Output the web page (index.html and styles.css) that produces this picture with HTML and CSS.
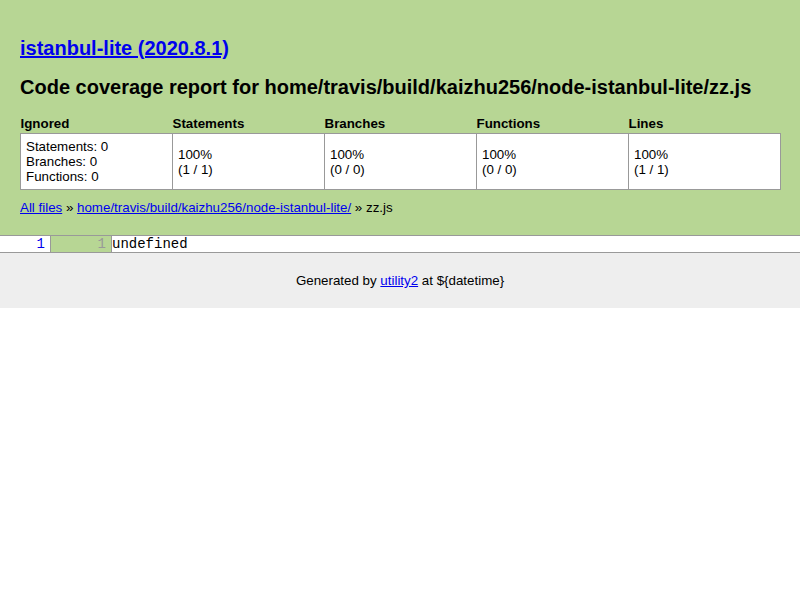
FILE: index.html
```html
<!DOCTYPE html>
<html>
<head>
<meta charset="utf-8">
<title>istanbul-lite</title>
<link rel="stylesheet" href="styles.css">
</head>
<body>
<div class="header">
  <h1><a href="#">istanbul-lite (2020.8.1)</a></h1>
  <h2>Code coverage report for home/travis/build/kaizhu256/node-istanbul-lite/zz.js</h2>
  <table class="summary">
    <thead>
      <tr><th>Ignored</th><th>Statements</th><th>Branches</th><th>Functions</th><th>Lines</th></tr>
    </thead>
    <tbody>
      <tr>
        <td>Statements: 0<br>Branches: 0<br>Functions: 0</td>
        <td>100%<br>(1 / 1)</td>
        <td>100%<br>(0 / 0)</td>
        <td>100%<br>(0 / 0)</td>
        <td>100%<br>(1 / 1)</td>
      </tr>
    </tbody>
  </table>
  <div class="path"><a href="#">All files</a> » <a href="#">home/travis/build/kaizhu256/node-istanbul-lite/</a> » zz.js</div>
</div>
<table class="code">
  <tr>
    <td class="line-count"><a href="#">1</a></td>
    <td class="line-coverage">1</td>
    <td class="text">undefined</td>
  </tr>
</table>
<div class="footer">Generated by <a href="#">utility2</a> at ${datetime}</div>
</body>
</html>
```

FILE: styles.css
```css
body {
  margin: 0;
  font-family: "Liberation Sans", Arial, sans-serif;
  font-size: 13.333px;
  line-height: 15px;
  color: #000;
  background: #fff;
}
a { color: #00e; }
.header {
  background: #b7d694;
  padding: 20px 20px 20px;
}
.header h1 {
  margin: 16px 0 0;
  font-size: 20px;
  line-height: 24px;
}
.header h2 {
  margin: 15px 0 0;
  font-size: 20px;
  line-height: 24px;
}
.summary {
  margin-top: 16px;
  width: 761px;
  border-collapse: collapse;
  table-layout: fixed;
}
.summary th {
  text-align: left;
  font-weight: bold;
  padding: 2px 0 2px;
  line-height: 14px;
}
.summary td {
  background: #fff;
  border: 1px solid #999;
  padding: 5px 5px;
  vertical-align: middle;
}
.path {
  margin-top: 10px;
}
.code {
  width: 100%;
  border-collapse: collapse;
  border-top: 1px solid #999;
  border-bottom: 1px solid #999;
  font-family: "Liberation Mono", monospace;
  font-size: 14px;
  line-height: 16px;
}
.code td {
  padding: 0;
  vertical-align: top;
}
.line-count {
  width: 45px;
  padding-right: 5px !important;
  text-align: right;
  border-right: 1px solid #999;
}
.line-count a { text-decoration: none; color: #00e; }
.line-coverage {
  width: 55px;
  padding-right: 5px !important;
  text-align: right;
  background: #b7d694;
  color: #999;
  border-right: 1px solid #999;
}
.text {
  color: #000;
}
.footer {
  background: #eee;
  padding: 20px;
  line-height: 15px;
  text-align: center;
}
```
